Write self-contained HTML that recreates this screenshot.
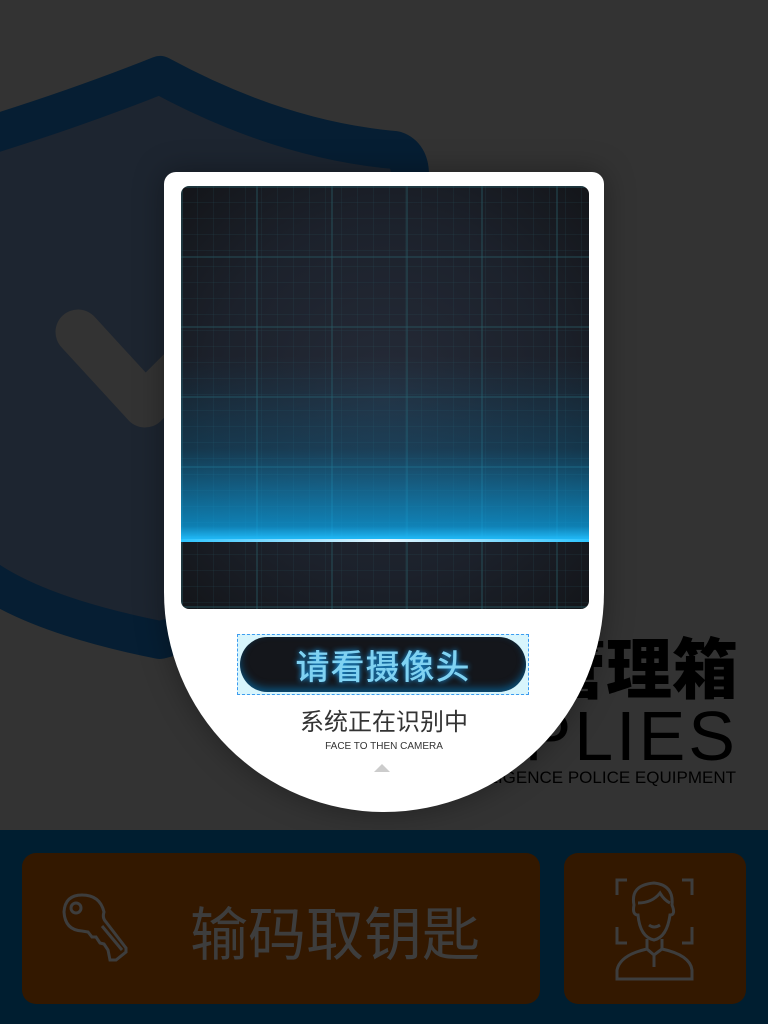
<!DOCTYPE html>
<html><head><meta charset="utf-8"><style>
html,body{margin:0;padding:0}
body{width:768px;height:1024px;position:relative;overflow:hidden;background:#333;font-family:"Liberation Sans","Noto Sans CJK SC",sans-serif}
.abs{position:absolute}
.t1{right:30px;top:622px;font-size:66px;font-weight:900;color:#000;font-family:"Noto Sans CJK SC",sans-serif;line-height:86px;white-space:nowrap}
.t2{right:30px;top:700px;font-size:70px;color:#000;letter-spacing:3px;line-height:72px;white-space:nowrap;font-weight:300}
.t3{right:32px;top:768px;font-size:17px;color:#000;white-space:nowrap}
.card{left:164px;top:172px;width:440px;height:640px;background:#fff;border-radius:12px 12px 220px 220px/12px 12px 220px 220px;box-shadow:0 0 30px rgba(0,0,0,.35)}
.scr{left:17px;top:14px;width:408px;height:423px;border-radius:8px;overflow:hidden;
background:
linear-gradient(rgba(40,80,90,.18) 1px,transparent 1px) 0 0/16px 16px,
linear-gradient(90deg,rgba(40,80,90,.18) 1px,transparent 1px) 0 0/16px 16px,
linear-gradient(rgba(40,90,100,.4) 2px,transparent 2px) 0 0/75px 70px,
linear-gradient(90deg,rgba(40,90,100,.4) 2px,transparent 2px) 0 0/75px 70px,
radial-gradient(ellipse at 50% 50%,#252b38 0%,#1c212b 60%,#131519 100%)}
.glow{left:0;top:170px;width:408px;height:185px;background:linear-gradient(rgba(0,160,230,0),rgba(0,150,220,.2) 50%,rgba(10,170,240,.7) 92%,#22c0ff 100%)}
.line{left:0;top:353px;width:408px;height:3px;background:linear-gradient(90deg,#2cc4ff,#e6f6ff 50%,#2cc4ff)}
.btnwrap{left:73px;top:462px;width:292px;height:61px;border:1px dashed #3c9cf0;background:#d8f5fc;box-sizing:border-box}
.btn{left:2px;top:2px;width:286px;height:55px;border-radius:28px;background:#14161b;box-shadow:inset 0 -4px 8px rgba(0,140,220,.5);color:#7fd2f2;font-size:34px;font-weight:500;text-align:center;line-height:55px;letter-spacing:1px;text-shadow:0 0 6px #1aa8ff;font-family:"Noto Sans CJK SC",sans-serif}
.s1{left:0;width:440px;top:530px;text-align:center;font-size:24px;color:#333;font-family:"Noto Sans CJK SC",sans-serif}
.s2{left:0;width:440px;top:569px;text-align:center;font-size:10px;color:#333}
.tri{left:210px;top:592px;width:0;height:0;border-left:8px solid transparent;border-right:8px solid transparent;border-bottom:8px solid #ccc}
.bar{left:0;top:830px;width:768px;height:194px;background:#001e30}
.b1{left:22px;top:853px;width:518px;height:151px;background:#331800;border-radius:14px}
.b2{left:564px;top:853px;width:182px;height:151px;background:#331800;border-radius:14px}
.bt{left:190px;top:890px;font-size:58px;color:#3d3d3d;font-family:"Noto Sans CJK SC",sans-serif;line-height:80px}
</style></head><body>
<svg class="abs" style="left:0;top:0" width="768" height="830">
<path d="M-60 150 Q60 115 160 75 Q280 140 395 150 Q410 155 410 175 L410 420 Q400 580 160 640 Q-40 600 -60 520 Z" fill="#1d2530" stroke="#061e33" stroke-width="38" stroke-linejoin="round"/>
<path d="M78 332 L145 405 L230 320" fill="none" stroke="#333" stroke-width="45" stroke-linecap="round" stroke-linejoin="round"/>
</svg>
<div class="abs t1">智能警用品管理箱</div>
<div class="abs t2">N SUPPLIES</div>
<div class="abs t3">INTELLIGENCE POLICE EQUIPMENT</div>
<div class="abs card">
 <div class="abs scr"><div class="abs glow"></div><div class="abs line"></div></div>
 <div class="abs btnwrap"><div class="abs btn">请看摄像头</div></div>
 <div class="abs s1">系统正在识别中</div>
 <div class="abs s2">FACE TO THEN CAMERA</div>
 <div class="abs tri"></div>
</div>
<div class="abs bar"></div>
<div class="abs b1"></div>
<div class="abs b2"></div>
<div class="abs bt">输码取钥匙</div>
<svg class="abs" style="left:60px;top:890px" width="75" height="80" fill="none" stroke="#3d3d3d" stroke-width="3">
<path d="M22 5 Q5 5 4 22 Q5 40 22 41 L28 42 L32 47 L36 47 L40 53 L44 54 L48 60 L50 70 L56 70 L66 62 L66 58 L46 32 Q42 28 44 22 Q40 5 22 5 Z"/>
<circle cx="16" cy="18" r="5"/><path d="M42 36 L62 60"/>
</svg>
<svg class="abs" style="left:612px;top:875px" width="86" height="110" fill="none" stroke="#3d3d3d" stroke-width="3">
<path d="M15 5 H5 V20 M70 5 H80 V20 M5 52 V68 H15 M80 52 V68 H70"/>
<path d="M26 40 Q20 40 22 30 Q18 10 42 8 Q62 10 60 30 Q64 40 58 40 Q55 62 42 65 Q28 62 26 40 Z"/>
<path d="M26 28 Q40 28 48 18 Q52 25 58 28"/>
<path d="M35 64 V74 L42 80 L50 74 V64 M35 74 Q8 80 5 95 V104 H80 V95 Q78 80 50 74 M42 80 V92"/>
<path d="M37 50 Q42 54 48 50"/>
</svg>
</body></html>
